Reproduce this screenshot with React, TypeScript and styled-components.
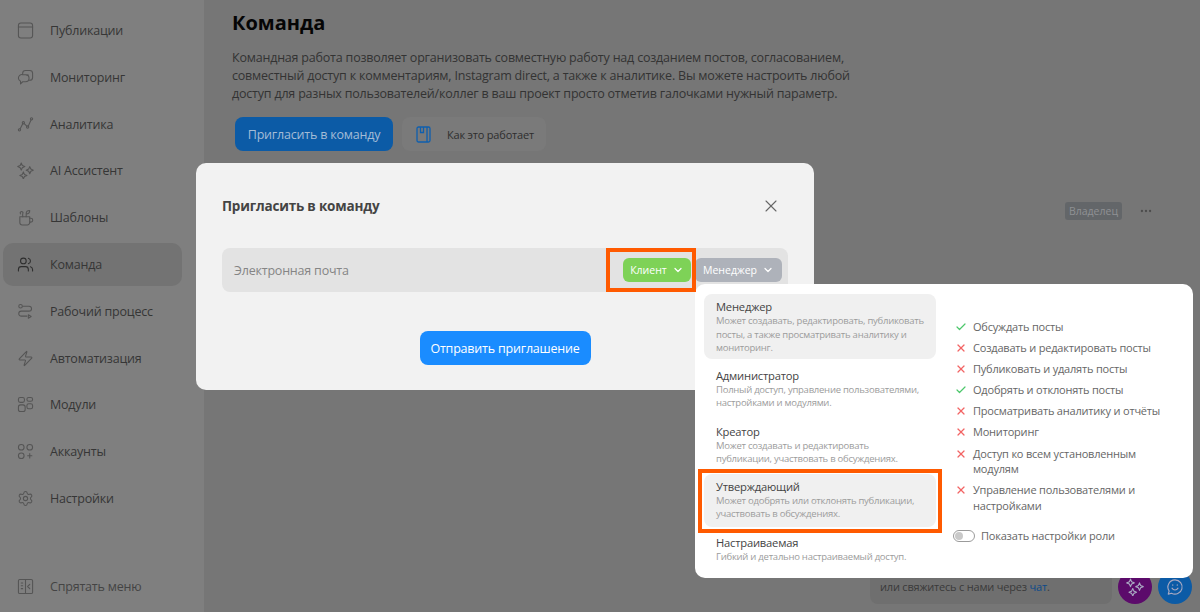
import React from 'react';
import styled, { createGlobalStyle } from 'styled-components';
import { Settings, Users, X, Zap, ChevronDown, Check, Ellipsis } from 'lucide-react';

const GlobalStyle = createGlobalStyle`
  html, body {
    margin: 0;
    height: 100%;
    overflow: hidden;
    background: #767676;
    font-family: "Open Sans", "Noto Sans", "Liberation Sans", sans-serif;
    letter-spacing: -0.2px;
  }
  * { box-sizing: border-box; }
`;

const Page = styled.div`
  position: relative;
  display: flex;
  width: 1200px;
  height: 612px;
  overflow: hidden;
`;

const Sidebar = styled.aside`
  display: flex;
  flex-direction: column;
  width: 204px;
  height: 100%;
  padding: 9px 22px 4px 3px;
  background: #7f7f7f;
`;

const NavList = styled.nav`
  display: flex;
  flex-direction: column;
  gap: 3.8px;
`;

const NavItem = styled.div<{ $active?: boolean }>`
  display: flex;
  align-items: center;
  gap: 16px;
  height: 43px;
  padding-left: 14px;
  border-radius: 10px;
  font-size: 12.5px;
  color: #363636;
  background: ${(p) => (p.$active ? '#737373' : 'transparent')};

  svg {
    flex: none;
    width: 17px;
    height: 17px;
    stroke-width: 1.5;
    color: ${(p) => (p.$active ? '#2e2e2e' : '#555')};
  }
`;

const HideMenu = styled(NavItem)`
  margin-top: auto;
  color: #444;
`;

const Main = styled.main`
  flex: 1;
  padding: 8px 0 0 28px;
  background: #767676;
`;

const Title = styled.h1`
  margin: 0 0 12px;
  font-size: 20px;
  line-height: 29px;
  font-weight: 700;
  letter-spacing: 0;
  color: #050505;
`;

const Description = styled.p`
  width: 660px;
  margin: 0 0 14px;
  font-size: 12.5px;
  line-height: 18px;
  color: #333;
`;

const ActionRow = styled.div`
  display: flex;
  gap: 9px;
  padding-left: 3px;
`;

const InviteButton = styled.div`
  display: flex;
  align-items: center;
  justify-content: center;
  width: 158px;
  height: 34px;
  border-radius: 8px;
  background: #0c5ba6;
  color: #a4bcd6;
  font-size: 12.5px;
`;

const HowButton = styled.div`
  display: flex;
  align-items: center;
  gap: 16px;
  width: 144px;
  height: 34px;
  padding-left: 14px;
  border-radius: 8px;
  background: #7a7a7a;
  color: #2e2e2e;
  font-size: 11px;
  svg { color: #0f5fae; }
`;

const OwnerRow = styled.div`
  display: flex;
  align-items: center;
  justify-content: flex-end;
  gap: 17px;
  margin: 51px 47px 0 0;
  svg { color: #4c4c4c; }
`;

const OwnerBadge = styled.span`
  padding: 2px 4px;
  border-radius: 3px;
  background: #636669;
  color: #8f9194;
  font-size: 10.5px;
  line-height: 14px;
  letter-spacing: 0;
`;

const ChatHint = styled.div`
  position: absolute;
  left: 870px;
  top: 570px;
  width: 242px;
  height: 34px;
  padding: 10px 0 0 10px;
  border-radius: 8px;
  background: #6f6f6f;
  color: #3a3a3a;
  font-size: 11px;
  line-height: 14px;
  a { color: #0c4a8a; }
`;

const Fab = styled.div<{ $color: string; $left: number }>`
  position: absolute;
  left: ${(p) => p.$left}px;
  top: 570px;
  display: flex;
  align-items: center;
  justify-content: center;
  width: 34px;
  height: 34px;
  border-radius: 50%;
  background: ${(p) => p.$color};
  color: #a9a9c2;
  svg { width: 18px; height: 18px; }
`;

const Modal = styled.section`
  position: absolute;
  left: 196px;
  top: 163px;
  display: flex;
  flex-direction: column;
  width: 618px;
  height: 227px;
  padding: 0 26px;
  border-radius: 10px;
  background: #f2f2f2;
`;

const ModalHead = styled.div`
  display: flex;
  align-items: center;
  justify-content: space-between;
  height: 85px;
  padding-right: 7px;
  svg { color: #666; }
`;

const ModalTitle = styled.h2`
  margin: 0;
  font-size: 13.5px;
  font-weight: 700;
  color: #444;
`;

const EmailField = styled.div`
  display: flex;
  align-items: center;
  height: 44px;
  padding: 0 6px 0 12px;
  border-radius: 8px;
  background: #e3e3e3;
`;

const Placeholder = styled.span`
  flex: 1;
  font-size: 12.5px;
  color: #858585;
`;

const RoleChip = styled.div<{ $bg: string; $width: number }>`
  display: flex;
  align-items: center;
  justify-content: center;
  gap: 5px;
  width: ${(p) => p.$width}px;
  height: 24px;
  margin-left: 4px;
  border-radius: 6px;
  background: ${(p) => p.$bg};
  color: #fff;
  font-size: 10.5px;
  letter-spacing: 0;
`;

const SendButton = styled.div`
  display: flex;
  align-items: center;
  justify-content: center;
  align-self: center;
  width: 171px;
  height: 34px;
  margin-top: 39px;
  border-radius: 8px;
  background: #1a8cff;
  color: #fff;
  font-size: 12.5px;
`;

const Dropdown = styled.section`
  position: absolute;
  left: 695px;
  top: 284px;
  display: flex;
  width: 498px;
  height: 294px;
  padding: 10px 0 0 9px;
  border-radius: 10px;
  background: #fff;
`;

const RoleList = styled.div`
  display: flex;
  flex-direction: column;
  width: 232px;
`;

const RoleOption = styled.div<{ $selected?: boolean; $top: number; $bottom: number }>`
  padding: ${(p) => p.$top}px 6px ${(p) => p.$bottom}px 12px;
  border-radius: 8px;
  background: ${(p) => (p.$selected ? '#f0f0f0' : 'transparent')};
`;

const RoleName = styled.div`
  font-size: 11.2px;
  line-height: 14px;
  color: #444;
`;

const RoleText = styled.div`
  font-size: 9.5px;
  line-height: 13.5px;
  letter-spacing: -0.25px;
  white-space: pre-line;
  color: #9c9c9c;
`;

const Permissions = styled.div`
  display: flex;
  flex-direction: column;
  gap: 5.6px;
  width: 210px;
  margin: 25px 0 0 20px;
`;

const Permission = styled.div`
  display: flex;
  gap: 6px;
  font-size: 11px;
  line-height: 15.5px;
  color: #666;
  svg { flex: none; margin: 2px 0 0 -1px; }
`;

const ToggleRow = styled.div`
  display: flex;
  align-items: center;
  gap: 6px;
  margin: 9.5px 0 0 -3px;
  font-size: 11px;
  line-height: 15px;
  color: #666;
`;

const Toggle = styled.span`
  display: flex;
  align-items: center;
  width: 22px;
  height: 12px;
  padding-left: 1px;
  border: 1px solid #9b9b9b;
  border-radius: 6px;
  &::before {
    content: '';
    width: 8px;
    height: 8px;
    border-radius: 50%;
    background: #c9c9c9;
  }
`;

const Highlight = styled.div<{ $left: number; $top: number; $width: number; $height: number }>`
  position: absolute;
  left: ${(p) => p.$left}px;
  top: ${(p) => p.$top}px;
  width: ${(p) => p.$width}px;
  height: ${(p) => p.$height}px;
  border: 4px solid #ff5a00;
  pointer-events: none;
`;

const Icon = ({ children }: { children: React.ReactNode }) => (
  <svg viewBox="0 0 24 24" fill="none" stroke="currentColor" strokeWidth="1.5" strokeLinecap="round" strokeLinejoin="round">
    {children}
  </svg>
);

const SparklesIcon = () => (
  <Icon>
    <path d="M6 1.500l1.500 3.500L11 6.500 7.500 8 6 11.500 4.500 8 1 6.500 4.500 5z" />
    <path d="M18 6.500l1.500 3.500L23 11.500 19.500 13 18 16.500 16.500 13 13 11.500 16.500 10z" />
    <path d="M9 14l1.500 3.500L14 19l-3.500 1.500L9 24l-1.500-3.500L4 19l3.500-1.500z" />
  </Icon>
);

const navItems: { label: string; active?: boolean; icon: React.ReactNode }[] = [
  {
    label: 'Публикации',
    icon: <Icon><rect x="2" y="1.500" width="20" height="21" rx="3.500" /><path d="M2 7h20" /></Icon>,
  },
  {
    label: 'Мониторинг',
    icon: <Icon><path d="M8 7.500V6a4 4 0 0 1 4-4h6a4 4 0 0 1 4 4v6a4 4 0 0 1-4 4h-1" /><path d="M8 8h4a5 5 0 0 1 5 5 5 5 0 0 1-5 5H8l-3 3v-3.600A5.500 5.500 0 0 1 2 13a5 5 0 0 1 6-5z" /><path d="M14 8.500h2" /></Icon>,
  },
  {
    label: 'Аналитика',
    icon: <Icon><circle cx="3.500" cy="19.500" r="1.600" /><circle cx="9" cy="9.500" r="1.600" /><circle cx="15" cy="15.500" r="1.600" /><circle cx="20.500" cy="4" r="1.600" /><path d="M4.500 18l3.600-7M10.200 10.700l3.600 3.600M16 14l3.800-8.400" /></Icon>,
  },
  { label: 'AI Ассистент', icon: <SparklesIcon /> },
  {
    label: 'Шаблоны',
    icon: <Icon><path d="M4 11h14v8a3.500 3.500 0 0 1-3.500 3.500h-7A3.500 3.500 0 0 1 4 19z" /><path d="M18 13h1.500a2.500 2.500 0 0 1 0 5.500H18" /><path d="M8 11V7a2 2 0 1 0-3 0" /><path d="M13 11V6c0-2 2-4 5-4 0 3-1.500 5-5 5" /></Icon>,
  },
  { label: 'Команда', active: true, icon: <Users /> },
  {
    label: 'Рабочий процесс',
    icon: <Icon><circle cx="5" cy="4.500" r="2.500" /><path d="M8 4.500h9a3.500 3.500 0 0 1 0 7H6a3.500 3.500 0 0 0 0 7h8" /><path d="M16 16.500l4 2.500-4 2.500z" /></Icon>,
  },
  { label: 'Автоматизация', icon: <Zap /> },
  {
    label: 'Модули',
    icon: <Icon><rect x="2" y="2" width="8.500" height="7" rx="2.500" /><rect x="14" y="2" width="8" height="5.500" rx="2.500" /><rect x="2" y="12.500" width="9.500" height="9.500" rx="3" /><rect x="14" y="11" width="8" height="7" rx="2.500" /></Icon>,
  },
  {
    label: 'Аккаунты',
    icon: <Icon><circle cx="6" cy="6" r="4" /><circle cx="18" cy="6" r="4" /><circle cx="6" cy="18" r="4" /><path d="M18 15v6M15 18h6" /></Icon>,
  },
  { label: 'Настройки', icon: <Settings /> },
];

const roles = [
  { name: 'Менеджер', text: 'Может создавать, редактировать, публиковать посты, а также просматривать аналитику и мониторинг.', selected: true, top: 6, bottom: 4 },
  { name: 'Администратор', text: 'Полный доступ, управление пользователями, настройками и модулями.', top: 10, bottom: 4 },
  { name: 'Креатор', text: 'Может создавать и редактировать\nпубликации, участвовать в обсуждениях.', top: 11, bottom: 8 },
  { name: 'Утверждающий', text: 'Может одобрять или отклонять публикации, участвовать в обсуждениях.', selected: true, top: 6, bottom: 6 },
  { name: 'Настраиваемая', text: 'Гибкий и детально настраиваемый доступ.', top: 9, bottom: 4 },
];

const permissions = [
  { text: 'Обсуждать посты', allowed: true },
  { text: 'Создавать и редактировать посты', allowed: false },
  { text: 'Публиковать и удалять посты', allowed: false },
  { text: 'Одобрять и отклонять посты', allowed: true },
  { text: 'Просматривать аналитику и отчёты', allowed: false },
  { text: 'Мониторинг', allowed: false },
  { text: 'Доступ ко всем установленным модулям', allowed: false },
  { text: 'Управление пользователями и настройками', allowed: false },
];

const App = () => (
  <Page>
    <GlobalStyle />
    <Sidebar>
      <NavList>
        {navItems.map((item) => (
          <NavItem key={item.label} $active={item.active}>
            {item.icon}
            {item.label}
          </NavItem>
        ))}
      </NavList>
      <HideMenu>
        <Icon>
          <rect x="2" y="2" width="20" height="20" rx="2" />
          <path d="M12 2v20M6 7h2M6 11h2M6 15h2M18 9l-3 3 3 3" />
        </Icon>
        Спрятать меню
      </HideMenu>
    </Sidebar>
    <Main>
      <Title>Команда</Title>
      <Description>
        Командная работа позволяет организовать совместную работу над созданием постов, согласованием,
        совместный доступ к комментариям, Instagram direct, а также к аналитике. Вы можете настроить любой
        доступ для разных пользователей/коллег в ваш проект просто отметив галочками нужный параметр.
      </Description>
      <ActionRow>
        <InviteButton>Пригласить в команду</InviteButton>
        <HowButton>
          <svg width="15" height="17" viewBox="0 0 15 17" fill="none" stroke="currentColor" strokeWidth="1.3">
            <rect x="1" y="1" width="13" height="15" rx="1.500" />
            <path d="M11 1v15M4.500 1v5.500h3V1" />
          </svg>
          Как это работает
        </HowButton>
      </ActionRow>
      <OwnerRow>
        <OwnerBadge>Владелец</OwnerBadge>
        <Ellipsis size={14} />
      </OwnerRow>
    </Main>
    <ChatHint>или свяжитесь с нами через <a>чат</a>.</ChatHint>
    <Fab $color="#5c0b6b" $left={1118}><SparklesIcon /></Fab>
    <Fab $color="#0c5ba6" $left={1158}>
      <Icon>
        <path d="M12 2.500a9.500 9.500 0 1 1-4.600 17.800L3 21.500l1.200-4.200A9.500 9.500 0 0 1 12 2.500z" />
        <path d="M8 13.500c1 1.700 2.400 2.500 4 2.500s3-.8 4-2.500M9 9v.5M15 9v.5" />
      </Icon>
    </Fab>
    <Modal>
      <ModalHead>
        <ModalTitle>Пригласить в команду</ModalTitle>
        <X size={20} strokeWidth={1.3} />
      </ModalHead>
      <EmailField>
        <Placeholder>Электронная почта</Placeholder>
        <RoleChip $bg="#7ed257" $width={68}>Клиент <ChevronDown size={12} strokeWidth={2.5} /></RoleChip>
        <RoleChip $bg="#aeb2ba" $width={87}>Менеджер <ChevronDown size={12} strokeWidth={2.5} /></RoleChip>
      </EmailField>
      <SendButton>Отправить приглашение</SendButton>
    </Modal>
    <Dropdown>
      <RoleList>
        {roles.map((role) => (
          <RoleOption key={role.name} $selected={role.selected} $top={role.top} $bottom={role.bottom}>
            <RoleName>{role.name}</RoleName>
            <RoleText>{role.text}</RoleText>
          </RoleOption>
        ))}
      </RoleList>
      <Permissions>
        {permissions.map((perm) => (
          <Permission key={perm.text}>
            {perm.allowed
              ? <Check size={12} color="#4cc76b" strokeWidth={2.4} />
              : <X size={12} color="#f26464" strokeWidth={2.4} />}
            <span>{perm.text}</span>
          </Permission>
        ))}
        <ToggleRow>
          <Toggle />
          Показать настройки роли
        </ToggleRow>
      </Permissions>
    </Dropdown>
    <Highlight $left={606} $top={248} $width={90} $height={44} />
    <Highlight $left={698} $top={469} $width={244} $height={64} />
  </Page>
);

export default App;
